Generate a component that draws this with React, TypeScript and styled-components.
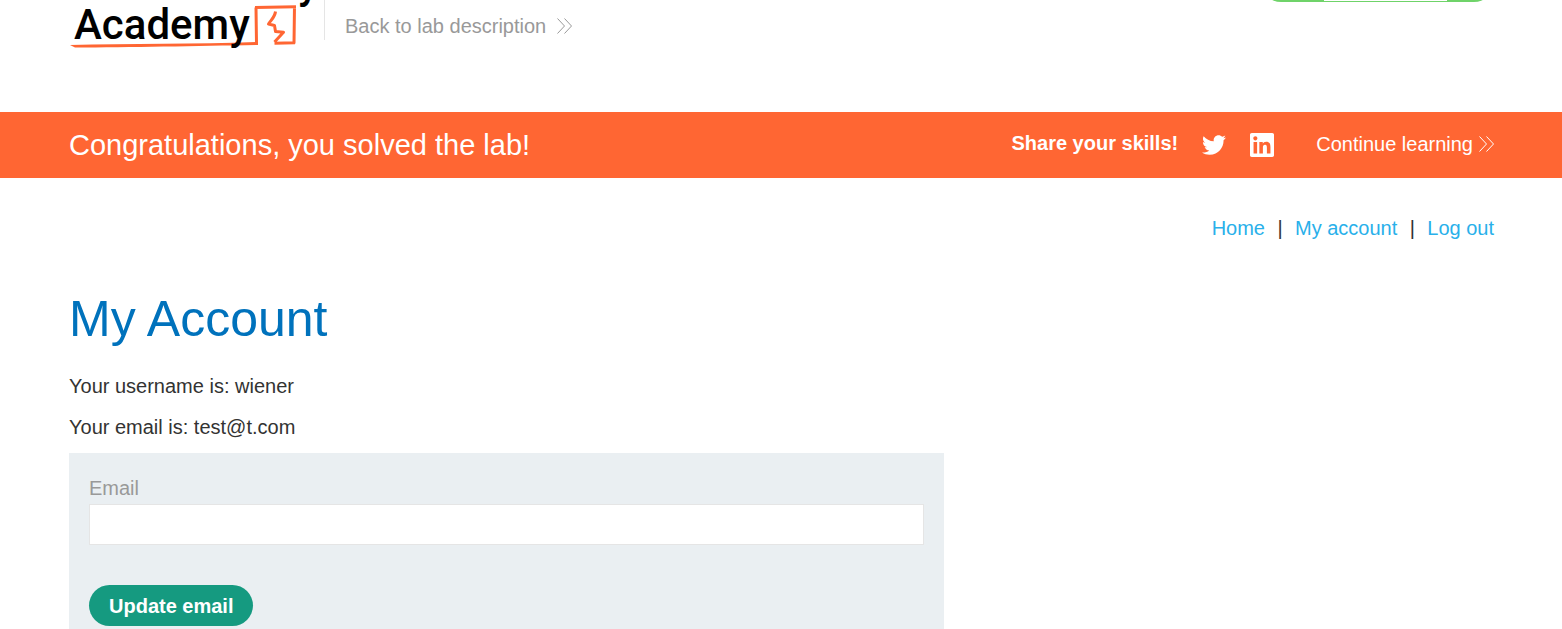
import React from "react";
import styled, { createGlobalStyle } from "styled-components";

const GlobalStyle = createGlobalStyle`
  * { box-sizing: border-box; }
  body {
    margin: 0;
    background: #fff;
    color: #333332;
    font-family: "Liberation Sans", Arial, sans-serif;
    font-size: 20px;
    line-height: 26px;
  }
  a { color: inherit; text-decoration: none; }
`;

const Container = styled.div`
  padding: 0 68px 0 69px;
`;

const Header = styled.header`
  overflow: hidden;
`;

const HeaderRow = styled(Container)`
  display: flex;
  align-items: flex-start;
  height: 112px;
`;

const Logo = styled.svg`
  display: block;
  width: 255px;
  height: 56px;
`;

const BackLink = styled.a`
  display: flex;
  align-items: center;
  gap: 11px;
  height: 40px;
  padding: 12px 0 0 20px;
  border-left: 1px solid #e5e5e5;
  color: #999;
`;

const LabStatus = styled.div`
  display: grid;
  grid-template-columns: 63px 1fr 47px;
  width: 233px;
  height: 40px;
  margin: -38px 0 0 auto;
  border-radius: 20px;
  background: #6fd369;
`;

const StatusLabel = styled.span`
  grid-column: 2;
  margin-bottom: 1px;
  background: #fff;
`;

const Banner = styled.section`
  background: #ff6633;
  color: #fff;
`;

const BannerRow = styled(Container)`
  display: flex;
  align-items: center;
  min-height: 66px;
`;

const BannerTitle = styled.h4`
  flex: 1;
  margin: 0;
  font-size: 29px;
  font-weight: 400;
  line-height: 32px;
`;

const Share = styled.div`
  display: flex;
  align-items: center;
  gap: 24px;
  margin-right: 42px;
`;

const ShareLabel = styled.strong`
  padding-bottom: 4px;
`;

const IconLink = styled.a`
  display: block;
  height: 24px;
`;

const ContinueLink = styled.a`
  display: flex;
  align-items: center;
  gap: 6px;
  padding-bottom: 2px;
`;

const Nav = styled.nav`
  display: flex;
  justify-content: flex-end;
  gap: 12px;
  padding-top: 37px;
`;

const NavLink = styled.a`
  color: #29b0ea;
`;

const Separator = styled.span`
  width: 6px;
  text-align: center;
`;

const Title = styled.h1`
  margin: 48px 0 24px;
  color: #0072bc;
  font-size: 50px;
  font-weight: 400;
  line-height: 60px;
`;

const Info = styled.p`
  margin: 0 0 15px;
`;

const Form = styled.form`
  display: flex;
  flex-direction: column;
  align-items: flex-start;
  max-width: 875px;
  margin-top: -2px;
  padding: 22px 20px 20px;
  background: #eaeff2;
`;

const Label = styled.label`
  color: #999;
`;

const Input = styled.input`
  width: 100%;
  height: 41px;
  margin: 3px 0 40px;
  padding: 0 10px;
  border: 1px solid #e5e5e5;
  background: #fff;
  font: inherit;
`;

const Submit = styled.button`
  height: 41px;
  padding: 0 20px;
  border: 0;
  border-radius: 21px;
  background: #159a80;
  color: #fff;
  font: inherit;
  font-weight: 700;
`;

const Chevrons = () => (
  <svg width="15" height="16" viewBox="0 0 15 16" fill="none" stroke="currentColor" aria-hidden="true">
    <path d="M.5.5 7.500 8 .5 15.500M7.500.5 14.500 8 7.500 15.500" />
  </svg>
);

export default function App() {
  return (
    <>
      <GlobalStyle />
      <Header>
        <HeaderRow>
          <Logo viewBox="0 0 255 56" role="img" aria-label="Academy">
            <path
              d="M187.500 43.500 187 7.500 M186 7.500 227 6.800 M225.500 6 225 43.500 M226 42.700 205.500 43.200 M206.500 11.500 C206 17 202 20 199.500 24 L205.500 25.500 206.500 31.500 214.500 32.300 205.500 42"
              fill="none"
              stroke="#ff6633"
              strokeWidth="3"
              strokeLinejoin="round"
            />
            <path d="M1 45 C60 44 130 44 189 42 L189 45 C130 46 60 47.500 6 47.500 Z" fill="#ff6633" />
            <g fill="#000" fontFamily="Roboto, sans-serif" fontWeight="500" fontSize="42">
              <text x="5" y="39">Academy</text>
              <text x="229" y="-2">y</text>
            </g>
          </Logo>
          <BackLink href="#lab">
            Back to lab description
            <Chevrons />
          </BackLink>
          <LabStatus><StatusLabel /></LabStatus>
        </HeaderRow>
      </Header>
      <Banner>
        <BannerRow>
          <BannerTitle>Congratulations, you solved the lab!</BannerTitle>
          <Share>
            <ShareLabel>Share your skills!</ShareLabel>
            <IconLink href="#twitter" aria-label="Twitter">
              <svg width="24" height="24" viewBox="0 0 24 24" fill="currentColor">
                <path d="M23.954 4.569c-.885.389-1.83.654-2.825.775 1.014-.611 1.794-1.574 2.163-2.723-.951.555-2.005.959-3.127 1.184-.896-.959-2.173-1.559-3.591-1.559-2.717 0-4.92 2.203-4.92 4.917 0 .39.045.765.127 1.124C7.691 8.094 4.066 6.13 1.64 3.161c-.427.722-.666 1.561-.666 2.475 0 1.71.87 3.213 2.188 4.096-.807-.026-1.566-.248-2.228-.616v.061c0 2.385 1.693 4.374 3.946 4.827-.413.111-.849.171-1.296.171-.314 0-.615-.03-.916-.086.631 1.953 2.445 3.377 4.604 3.417-1.68 1.319-3.809 2.105-6.102 2.105-.39 0-.779-.023-1.17-.067 2.189 1.394 4.768 2.209 7.557 2.209 9.054 0 13.999-7.496 13.999-13.986 0-.209 0-.42-.015-.63.961-.689 1.8-1.56 2.46-2.548z" />
              </svg>
            </IconLink>
            <IconLink href="#linkedin" aria-label="LinkedIn">
              <svg width="24" height="24" viewBox="0 0 24 24" fill="currentColor">
                <path d="M20.447 20.452h-3.554v-5.569c0-1.328-.027-3.037-1.852-3.037-1.853 0-2.136 1.445-2.136 2.939v5.667H9.351V9h3.414v1.561h.046c.477-.9 1.637-1.85 3.37-1.85 3.601 0 4.267 2.37 4.267 5.455v6.286zM5.337 7.433c-1.144 0-2.063-.926-2.063-2.065 0-1.138.92-2.063 2.063-2.063 1.14 0 2.064.925 2.064 2.063 0 1.139-.925 2.065-2.064 2.065zm1.782 13.019H3.555V9h3.564v11.452zM22.225 0H1.771C.792 0 0 .774 0 1.729v20.542C0 23.227.792 24 1.771 24h20.451C23.2 24 24 23.227 24 22.271V1.729C24 .774 23.2 0 22.222 0h.003z" />
              </svg>
            </IconLink>
          </Share>
          <ContinueLink href="#next">
            Continue learning
            <Chevrons />
          </ContinueLink>
        </BannerRow>
      </Banner>
      <Container as="main">
        <Nav>
          <NavLink href="#home">Home</NavLink>
          <Separator>|</Separator>
          <NavLink href="#account">My account</NavLink>
          <Separator>|</Separator>
          <NavLink href="#logout">Log out</NavLink>
        </Nav>
        <Title>My Account</Title>
        <Info>Your username is: wiener</Info>
        <Info>Your email is: test@t.com</Info>
        <Form>
          <Label htmlFor="email">Email</Label>
          <Input id="email" type="email" name="email" />
          <Submit type="submit">Update email</Submit>
        </Form>
      </Container>
    </>
  );
}
